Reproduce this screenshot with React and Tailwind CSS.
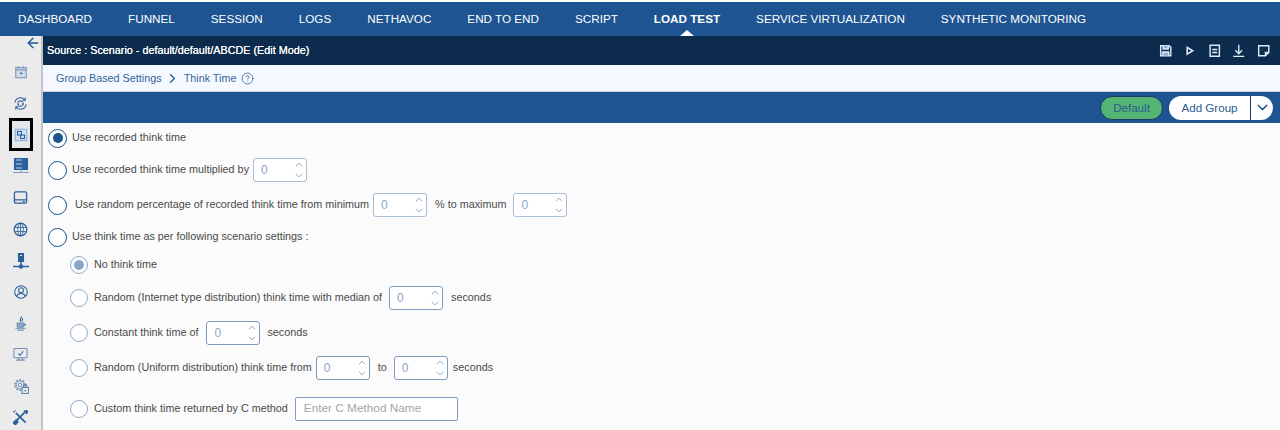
import { ChevronUp, ChevronDown, ChevronRight, CircleHelp, ArrowLeft } from 'lucide-react';

const NAV_ITEMS = [
  'DASHBOARD',
  'FUNNEL',
  'SESSION',
  'LOGS',
  'NETHAVOC',
  'END TO END',
  'SCRIPT',
  'LOAD TEST',
  'SERVICE VIRTUALIZATION',
  'SYNTHETIC MONITORING',
];

// Small stroke icons for the left rail and the source bar
const Glyph = ({ children, className = 'w-4 h-4 text-[#2a609c]', strokeWidth = 1.1 }) => (
  <svg viewBox="0 0 16 16" fill="none" stroke="currentColor" strokeWidth={strokeWidth} className={className}>
    {children}
  </svg>
);

const RailIcons = [
  <Glyph className="w-[14px] h-[14px] text-[#7f9cc0]" strokeWidth={1.3}>
    <rect x="2" y="3" width="12" height="11.5" fill="#d3dde9" />
    <path d="M5 1v3M11 1v3M2 5.5h12" />
    <path d="M7 9.5h2.5" stroke="#2a609c" strokeWidth="1.8" />
  </Glyph>,
  <Glyph className="w-[15px] h-[15px] text-[#2a609c]" strokeWidth={1.1}>
    <circle cx="8" cy="8" r="2.8" strokeWidth="1.5" strokeDasharray="2.4 0.8" />
    <path d="M2 7A6 6 0 0 1 12.5 4M14 9A6 6 0 0 1 3.5 12M13 1.5V4.5h-3M3 14.5V11.5h3" />
  </Glyph>,
  <Glyph className="w-[14px] h-[14px] text-[#2a609c]" strokeWidth={1.2}>
    <rect x="1.5" y="1.5" width="13" height="13" fill="#cfe0f2" stroke="#8fb0d4" />
    <rect x="4" y="4" width="4.5" height="4" />
    <rect x="7.5" y="8" width="4.5" height="4" />
  </Glyph>,
  <Glyph className="w-[16px] h-[16px] text-[#2a609c]">
    <path d="M1.5 0.5h13v3h-13zM1.5 4.5h13v3h-13zM1.5 8.5h13v3h-13z" fill="currentColor" />
    <path d="M3 2h6M3 6h6M3 10h6" stroke="#dfe8f2" strokeWidth="0.8" />
    <path d="M0 14.5h16M8 11.5v3" stroke="#7f9cc0" />
  </Glyph>,
  <Glyph className="w-[15px] h-[15px] text-[#2a609c]" strokeWidth={1.4}>
    <rect x="1.5" y="2" width="13" height="12" rx="1.5" />
    <path d="M1.5 10.5h13M10.5 12.3h2" />
  </Glyph>,
  <Glyph className="w-[15px] h-[15px] text-[#2a609c]" strokeWidth={0.9}>
    <circle cx="8" cy="8" r="6.8" strokeWidth="1.3" />
    <ellipse cx="8" cy="8" rx="3" ry="6.8" />
    <path d="M1.5 5.8h13M1.5 10.2h13M8 1.2v13.6" />
  </Glyph>,
  <Glyph className="w-[16px] h-[16px] text-[#2a609c]">
    <path d="M5.5 0.5h5v8h-5z" fill="currentColor" />
    <path d="M7 2.5h2" stroke="#dfe8f2" />
    <path d="M0 13.5h16M8 8.5v5" strokeWidth="1.4" />
    <circle cx="8" cy="13.5" r="1.7" fill="currentColor" />
  </Glyph>,
  <Glyph className="w-[14px] h-[14px] text-[#2a609c]" strokeWidth={1.2}>
    <circle cx="8" cy="8" r="7.2" />
    <circle cx="8" cy="6" r="2.8" />
    <path d="M3 13c.8-2.3 2.8-3.3 5-3.3s4.2 1 5 3.3" />
  </Glyph>,
  <Glyph className="w-[15px] h-[15px] text-[#6f8fb3]" strokeWidth={1.2}>
    <path d="M8.5 0.5c1.5 2-2 3-.5 5.5M10 2.5c1 1.5-1 2-.3 3.5" stroke="#2a609c" />
    <path d="M4.5 7.5h7v2.5c0 1.3-1 2-2 2h-3c-1 0-2-.7-2-2z" fill="#8fa9c8" />
    <path d="M11.5 8.5h1.5v1.5h-1.5M2.5 13h11M4.500 15h7" />
  </Glyph>,
  <Glyph className="w-[15px] h-[15px] text-[#6f8fb3]">
    <rect x="1" y="1.5" width="14" height="10" rx="1" />
    <path d="M5.5 7l2 1.8L11 4.5" stroke="#2a609c" />
    <path d="M3.5 14h9M6 11.5V14M10 11.5V14" />
  </Glyph>,
  <Glyph className="w-[16px] h-[16px] text-[#7f9cc0]">
    <circle cx="7" cy="7" r="5" strokeWidth="2" strokeDasharray="1.8 1.4" />
    <circle cx="7" cy="7" r="4" />
    <circle cx="7" cy="7" r="1.8" />
    <rect x="9" y="9.5" width="6.5" height="6" fill="#ebebeb" stroke="#5f84ad" />
    <path d="M10.5 9.5V8a1.7 1.7 0 0 1 3.4 0v1.5" stroke="#5f84ad" />
    <path d="M12.2 12v1.5" stroke="#2a609c" />
  </Glyph>,
  <Glyph className="w-[15px] h-[15px] text-[#2a609c]" strokeWidth={1.8}>
    <path d="M3 3l10.5 10.5M12.5 2.5L2.5 12.5" />
    <path d="M0.5 2.5L2.5 0.5M11.5 1.5l3-1 1 1-1 3M3.5 10.5l2 2-2.5 3h-1l-1.5-1.5v-1z" strokeWidth="1.2" fill="currentColor" />
  </Glyph>,
];

const Radio = ({ checked, muted }) => (
  <span
    className={`flex shrink-0 items-center justify-center rounded-full border-[1.5px] bg-white ${
      muted ? 'w-[18px] h-[18px] border-[#8faccb]' : 'w-[19px] h-[19px] border-[#1d5491]'
    }`}
  >
    {checked && (
      <span className={`w-2.5 h-2.5 rounded-full ${muted ? 'bg-[#8ba6c8]' : 'bg-[#1d5491]'}`} />
    )}
  </span>
);

const Spinner = ({ muted }) => (
  <span
    className={`relative flex h-[24px] w-[54px] shrink-0 items-center rounded-[3px] border bg-white pl-[7px] text-xs text-[#8ba6c8] ${
      muted ? 'border-[#7f9cc0]' : 'border-[#a8bdd6]'
    }`}
  >
    0
    <span className="absolute right-[1px] top-0 flex h-full flex-col justify-center text-[#6f8fb3]">
      <ChevronUp size={12} strokeWidth={1.7} />
      <ChevronDown size={12} strokeWidth={1.7} />
    </span>
  </span>
);

const App = () => (
  <div className="w-[1280px] h-[430px] overflow-hidden flex flex-col bg-white font-['Liberation_Sans',Arial,sans-serif] text-[#333]">
    <nav className="flex h-[36px] shrink-0 items-stretch border-t-2 border-white bg-[#1d5491] text-[11.7px] text-white">
      {NAV_ITEMS.map((label) => (
        <span key={label} className={`relative flex items-center px-[18px] ${label === 'LOAD TEST' ? 'font-bold' : ''}`}>
          {label}
          {label === 'LOAD TEST' && (
            <span className="absolute bottom-0 left-1/2 -ml-[7px] border-x-[7px] border-b-[6px] border-x-transparent border-b-white" />
          )}
        </span>
      ))}
    </nav>

    <div className="flex flex-1 min-h-0">
      <aside className="flex w-[43px] shrink-0 flex-col items-center border-r-2 border-[#c4c4c4] bg-[#ebebeb]">
        <div className="flex h-[20.5px] w-full shrink-0 justify-end">
          <ArrowLeft size={16} strokeWidth={2} className="-mt-[1px] text-[#1d5491]" />
        </div>
        {RailIcons.map((icon, i) => (
          <span key={i} className="flex h-[31.4px] w-[24px] shrink-0 items-center justify-center">
            {i === 2 ? (
              <span className="flex h-[33px] w-[24px] shrink-0 items-center justify-center border-[3px] border-black bg-[#e4e7ea]">
                {icon}
              </span>
            ) : (
              icon
            )}
          </span>
        ))}
      </aside>

      <main className="flex min-w-0 flex-1 flex-col bg-[#fbfbfb]">
        <div className="flex h-[29px] shrink-0 items-center justify-between bg-[#0d2c4d] pl-1 pr-[10px] text-[10.8px] font-medium text-white [text-shadow:0_0_0.4px_#fff]">
          <span>Source : Scenario - default/default/ABCDE (Edit Mode)</span>
          <div className="flex items-center gap-[11px] text-[#dcebf8]">
            <Glyph className="w-[13.5px] h-[13.5px]" strokeWidth={1.7}>
              <path d="M2 2h10l2 2v10H2z" />
              <path d="M5 2v4h6V2M4.5 14V9.5h7V14" fill="#8fb4d8" />
            </Glyph>
            <Glyph className="w-[13.5px] h-[13.5px]" strokeWidth={1.9}>
              <path d="M5 4l6.5 4L5 12z" />
            </Glyph>
            <Glyph className="w-[13.5px] h-[13.5px]" strokeWidth={1.7}>
              <path d="M2.5 1.5h11v13h-11zM5 6.5h6M5 10h6" />
            </Glyph>
            <Glyph className="w-[13.5px] h-[13.5px]" strokeWidth={1.6}>
              <path d="M8 1v10M4 7.5L8 11.5l4-4M1.5 14.8h13" />
            </Glyph>
            <Glyph className="w-[13.5px] h-[13.5px]" strokeWidth={1.7}>
              <path d="M2 2h12v8l-4 4H2zM14 10h-4v4" />
            </Glyph>
          </div>
        </div>

        <div className="flex h-[27px] shrink-0 items-center border-b border-[#d5d5d5] bg-[#f6f8ff] pl-[13px] text-[10.8px] text-[#336699]">
          <span>Group Based Settings</span>
          <ChevronRight size={15} strokeWidth={2.2} className="mx-[3.5px] text-[#2a609c]" />
          <span>Think Time</span>
          <CircleHelp size={13} strokeWidth={1.5} className="ml-[4.5px]" />
        </div>

        <div className="flex h-[31px] shrink-0 items-center justify-end gap-[6px] bg-[#1d5491] pr-[7px] text-[11.6px]">
          <span className="flex h-[24px] w-[63px] items-center justify-center rounded-full border border-[#16395f] bg-[#53b574] text-[#2d5a8f]">
            Default
          </span>
          <div className="flex h-[24px] w-[104px] overflow-hidden rounded-full bg-white text-[#2d5a8f]">
            <span className="flex w-[81px] items-center justify-center">Add Group</span>
            <span className="flex flex-1 items-center justify-center border-l border-[#16395f]">
              <ChevronDown size={17} strokeWidth={2} />
            </span>
          </div>
        </div>

        <div className="flex flex-col pl-[5px] text-[10.8px] text-[#4a4a4a]">
          <div className="flex h-[30px] shrink-0 items-center gap-[5px]">
            <Radio checked />
            <span className="-mt-[2px]">Use recorded think time</span>
          </div>
          <div className="flex h-[34px] shrink-0 items-center gap-[5px]">
            <Radio />
            <span className="-mr-[1px] -mt-[1px]">Use recorded think time multiplied by</span>
            <Spinner />
          </div>
          <div className="flex h-[36px] shrink-0 items-center">
            <Radio />
            <span className="ml-[8px] mr-[4px] -mt-[1px]">Use random percentage of recorded think time from minimum</span>
            <Spinner />
            <span className="ml-[8px] mr-[7px] -mt-[1px]">% to maximum</span>
            <Spinner />
          </div>
          <div className="flex h-[28px] shrink-0 items-center gap-[5px]">
            <Radio />
            <span className="-mt-[1px]">Use think time as per following scenario settings :</span>
          </div>

          <div className="flex flex-col pl-[22px]">
            <div className="flex h-[28px] shrink-0 items-center gap-[6px]">
              <Radio checked muted />
              <span className="-mt-[1px]">No think time</span>
            </div>
            <div className="flex h-[38px] shrink-0 items-center gap-[6px]">
              <Radio muted />
              <span className="mr-[1px] -mt-[1px]">Random (Internet type distribution) think time with median of</span>
              <Spinner muted />
              <span className="ml-[2px] -mt-[1px]">seconds</span>
            </div>
            <div className="flex h-[32px] shrink-0 items-center gap-[6px]">
              <Radio muted />
              <span className="mr-[2px] -mt-[1px]">Constant think time of</span>
              <Spinner muted />
              <span className="ml-[1px] -mt-[1px]">seconds</span>
            </div>
            <div className="flex h-[38px] shrink-0 items-center gap-[6px]">
              <Radio muted />
              <span className="-mr-[2px] -mt-[1px]">Random (Uniform distribution) think time from</span>
              <Spinner muted />
              <span className="ml-[2px] mr-[1px] -mt-[1px]">to</span>
              <Spinner muted />
              <span className="-ml-[1px] -mt-[1px]">seconds</span>
            </div>
            <div className="flex h-[44px] shrink-0 items-center gap-[6px]">
              <Radio muted />
              <span className="mr-[1px] -mt-[1px]">Custom think time returned by C method</span>
              <span className="flex h-[24px] w-[163px] items-center rounded-[2px] border border-[#7f9cc0] bg-white pl-[8px] text-[11.8px] text-[#a5a5a5]">
                Enter C Method Name
              </span>
            </div>
          </div>
        </div>
      </main>
    </div>
  </div>
);

export default App;
